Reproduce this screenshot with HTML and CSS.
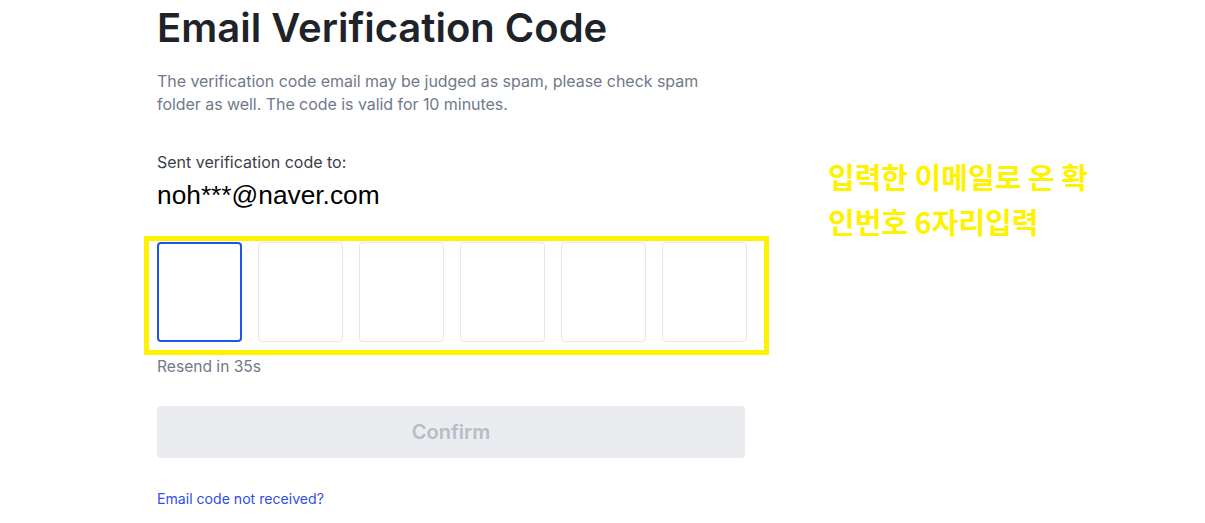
FILE: index.html
```html
<!DOCTYPE html>
<html lang="en">
<head>
<meta charset="utf-8">
<title>Email Verification Code</title>
<link rel="stylesheet" href="styles.css">
</head>
<body>
<div class="page">
  <main class="form">
    <h1 class="title">Email Verification Code</h1>
    <p class="desc">The verification code email may be judged as spam, please check spam<br>folder as well. The code is valid for 10 minutes.</p>
    <div class="sent-label">Sent verification code to:</div>
    <div class="sent-email">noh***@naver.com</div>
    <div class="code-row">
      <div class="code-box focused"></div>
      <div class="code-box"></div>
      <div class="code-box"></div>
      <div class="code-box"></div>
      <div class="code-box"></div>
      <div class="code-box"></div>
      <div class="highlight"></div>
    </div>
    <div class="resend">Resend in 35s</div>
    <button class="confirm" type="button">Confirm</button>
    <a class="link" href="#">Email code not received?</a>
  </main>
  <div class="note">입력한 이메일로 온 확<br>인번호 6자리입력</div>
</div>
</body>
</html>
```

FILE: styles.css
```css
html, body {
  margin: 0;
  padding: 0;
  background: #ffffff;
}

.page {
  position: relative;
  width: 1205px;
  height: 523px;
  overflow: hidden;
  font-family: Inter, "Noto Sans", sans-serif;
}

.form {
  display: flex;
  flex-direction: column;
  align-items: flex-start;
  width: 590px;
  padding-left: 157px;
  padding-top: 4px;
}

.title {
  margin: 0;
  font-size: 40px;
  line-height: 48px;
  font-weight: 600;
  color: #1e2329;
}

.desc {
  margin: 18px 0 0;
  font-size: 16px;
  line-height: 23px;
  letter-spacing: -0.05px;
  color: #707a8a;
}

.sent-label {
  margin-top: 36px;
  font-size: 16px;
  line-height: 20px;
  color: #3b4048;
}

.sent-email {
  margin-top: 8px;
  font-family: "Liberation Sans", Arial, sans-serif;
  font-size: 26.3px;
  line-height: 30px;
  color: #000000;
}

.code-row {
  position: relative;
  margin-top: 32px;
  display: flex;
  gap: 16px;
  width: 590px;
}

.code-box {
  box-sizing: border-box;
  width: 85px;
  height: 100px;
  border: 1px solid #e6e8ea;
  border-radius: 4px;
  background: #ffffff;
}

.code-box.focused {
  border: 2px solid #1f55e8;
}

.highlight {
  position: absolute;
  left: -13px;
  top: -6px;
  width: 625px;
  height: 119px;
  box-sizing: border-box;
  border: 5px solid #fff200;
  pointer-events: none;
}

.resend {
  margin-top: 15px;
  font-size: 15.6px;
  line-height: 20px;
  color: #707a8a;
}

.confirm {
  margin-top: 29px;
  width: 588px;
  height: 52px;
  border: 0;
  border-radius: 4px;
  background: #eaecef;
  color: #b7bdc6;
  font-family: Inter, "Noto Sans", sans-serif;
  font-size: 20px;
  font-weight: 600;
  padding: 0;
}

.link {
  margin-top: 31px;
  font-size: 14.1px;
  line-height: 20px;
  color: #2f4fe6;
  text-decoration: none;
}

.note {
  position: absolute;
  left: 828px;
  top: 154px;
  font-family: "Noto Sans CJK KR", sans-serif;
  font-size: 29px;
  line-height: 45px;
  font-weight: 700;
  color: #fff200;
  white-space: nowrap;
}
```
